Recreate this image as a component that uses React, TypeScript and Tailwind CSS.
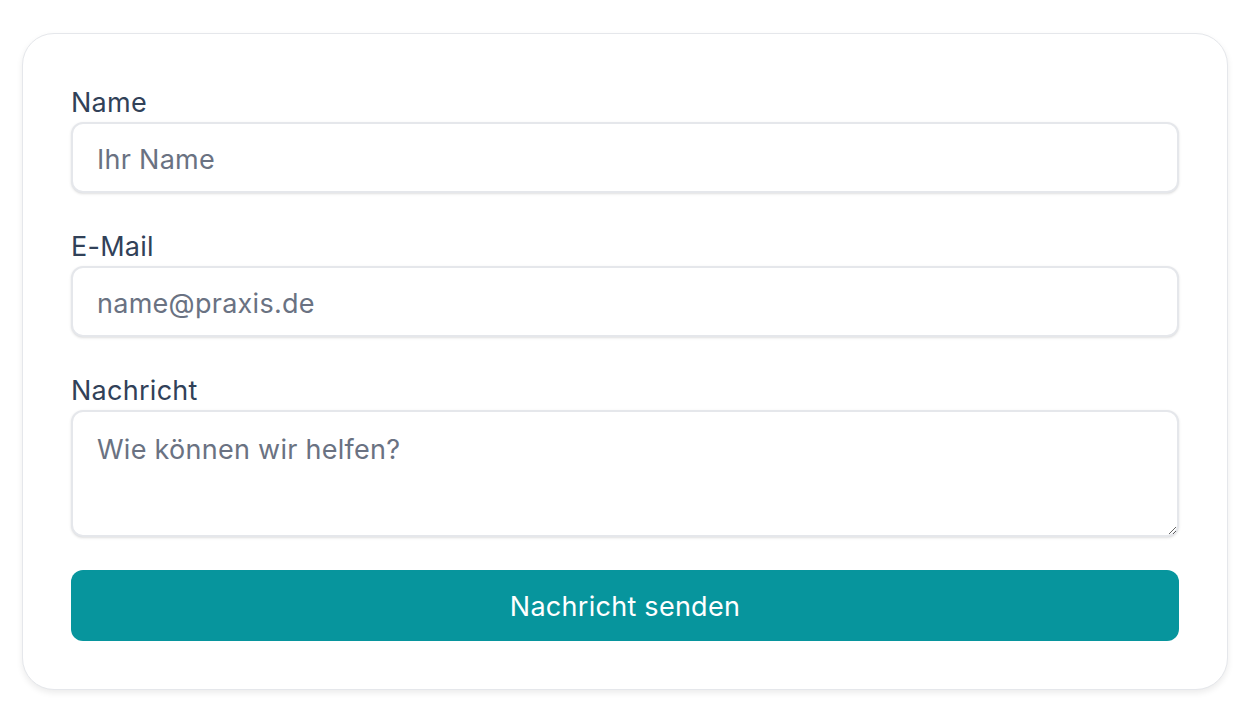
export default function App() {
  return (
    <div className="min-h-screen bg-white pl-[22px] pr-[20px] pt-[33px] font-['Inter',_'Liberation_Sans',_sans-serif]">
      <form
        className="flex flex-col gap-[33px] rounded-[32px] border border-gray-200 bg-white p-12 shadow-[0_3px_6px_rgba(0,0,0,0.08)]"
        onSubmit={(e) => e.preventDefault()}
      >
        {/* Name */}
        <div className="flex flex-col">
          <label className="pt-[2px] text-[27px] leading-[38px] tracking-[0.01em] text-slate-700">Name</label>
          <input
            type="text"
            placeholder="Ihr Name"
            className="h-[71px] rounded-xl border-2 border-gray-200 bg-white px-6 pt-[4px] text-[27px] tracking-[0.01em] text-slate-700 shadow-sm outline-none placeholder:text-gray-500"
          />
        </div>

        {/* E-Mail */}
        <div className="flex flex-col">
          <label className="pt-[2px] text-[27px] leading-[38px] tracking-[0.01em] text-slate-700">E-Mail</label>
          <input
            type="email"
            placeholder="name@praxis.de"
            className="h-[71px] rounded-xl border-2 border-gray-200 bg-white px-6 pt-[4px] text-[27px] tracking-[0.01em] text-slate-700 shadow-sm outline-none placeholder:text-gray-500"
          />
        </div>

        {/* Nachricht */}
        <div className="flex flex-col">
          <label className="pt-[2px] text-[27px] leading-[38px] tracking-[0.01em] text-slate-700">Nachricht</label>
          <textarea
            placeholder="Wie können wir helfen?"
            className="h-[127px] rounded-xl border-2 border-gray-200 bg-white px-6 pt-[18px] pb-[12px] text-[27px] leading-[39px] tracking-[0.01em] text-slate-700 shadow-sm outline-none placeholder:text-gray-500"
          />
        </div>

        <button
          type="submit"
          className="h-[71px] rounded-xl bg-[#07959d] pt-[4px] text-[27px] tracking-[0.01em] text-white"
        >
          Nachricht senden
        </button>
      </form>
    </div>
  );
}
